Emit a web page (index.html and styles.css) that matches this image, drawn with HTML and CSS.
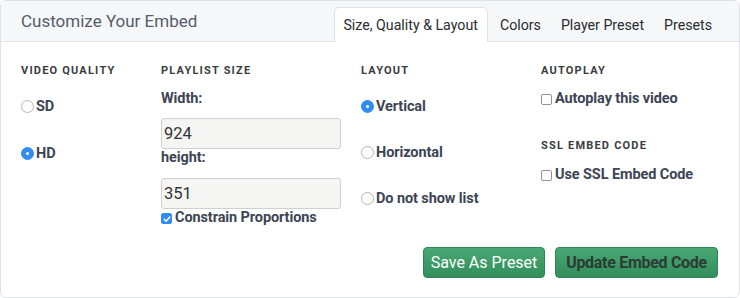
FILE: index.html
```html
<!DOCTYPE html>
<html>
<head>
<meta charset="utf-8">
<link rel="stylesheet" href="styles.css">
</head>
<body>
<div class="card">
  <div class="head">
    <div class="title">Customize Your Embed</div>
    <div class="tabs">
      <div class="tab active">Size, Quality &amp; Layout</div>
      <div class="tab">Colors</div>
      <div class="tab">Player Preset</div>
      <div class="tab">Presets</div>
    </div>
  </div>
  <div class="body">
    <div class="grid">
      <div class="col col-quality">
        <div class="heading">Video Quality</div>
        <div class="opt first"><span class="radio"></span>SD</div>
        <div class="opt"><span class="radio on"></span>HD</div>
      </div>
      <div class="col col-size">
        <div class="heading">Playlist Size</div>
        <div class="lbl first">Width:</div>
        <div class="field">924</div>
        <div class="lbl">height:</div>
        <div class="field">351</div>
        <div class="chk-row tight"><span class="check on"><svg viewBox="0 0 12 12" width="12" height="12"><path d="M3.2 6.3 L5.1 8.2 L8.8 4.1" fill="none" stroke="#fff" stroke-width="1.5" stroke-linecap="round" stroke-linejoin="round"/></svg></span>Constrain Proportions</div>
      </div>
      <div class="col col-layout">
        <div class="heading">Layout</div>
        <div class="opt first"><span class="radio on"></span>Vertical</div>
        <div class="opt gap2"><span class="radio"></span>Horizontal</div>
        <div class="opt gap2"><span class="radio"></span>Do not show list</div>
      </div>
      <div class="col col-auto">
        <div class="heading">Autoplay</div>
        <div class="chk-row first"><span class="check"></span>Autoplay this video</div>
        <div class="heading ssl">SSL Embed Code</div>
        <div class="chk-row ssl-row"><span class="check"></span>Use SSL Embed Code</div>
      </div>
    </div>
    <div class="actions">
      <button class="btn btn-light">Save As Preset</button>
      <button class="btn btn-dark">Update Embed Code</button>
    </div>
  </div>
</div>
</body>
</html>
```
FILE: styles.css
```css
* { box-sizing: border-box; }
html, body { margin: 0; padding: 0; background: #fff; }
body { font-family: Roboto, "Liberation Sans", sans-serif; }

.card {
  width: 740px;
  height: 298px;
  border: 1px solid #dfe1e5;
  border-radius: 6px;
  overflow: hidden;
  background: #fff;
}

.head {
  height: 41px;
  background: #f6f7f9;
  border-bottom: 1px solid #e2e4e8;
  display: flex;
  align-items: flex-end;
  padding: 0 17px 0 20px;
}
.title {
  flex: 1;
  align-self: center;
  font-size: 17px;
  color: #555c6b;
  padding-bottom: 1px;
}
.tabs { display: flex; margin-bottom: -1px; }
.tab {
  height: 35px;
  line-height: 34px;
  padding: 0 9px;
  font-size: 14.2px;
  color: #2a2c30;
  border: 1px solid transparent;
  border-bottom: none;
  white-space: nowrap;
}
.tab.active {
  background: #fff;
  border-color: #dfe1e5;
  border-radius: 5px 5px 0 0;
  padding: 0 9px 0 8px;
  margin-right: 2px;
}

.body { padding: 22px 20px 0 20px; }
.grid {
  display: grid;
  grid-template-columns: 140px 200px 180px 1fr;
}
.col { display: flex; flex-direction: column; align-items: flex-start; }

.heading {
  font-size: 11px;
  line-height: 14px;
  font-weight: 700;
  letter-spacing: 1.2px;
  text-transform: uppercase;
  color: #3a3c40;
}

.opt {
  display: flex;
  align-items: center;
  height: 20px;
  font-size: 14.5px;
  font-weight: 700;
  color: #3d4554;
  letter-spacing: -0.1px;
  margin-top: 27px;
}
.opt.first { margin-top: 18px; }
.opt.gap2 { margin-top: 26px; }

.radio {
  width: 13px;
  height: 13px;
  border-radius: 50%;
  border: 1px solid #b4b6b9;
  background: #fff;
  margin-right: 2px;
  flex: none;
  position: relative;
}
.radio.on {
  background: #2f8cf0;
  border-color: #2f8cf0;
}
.radio.on::after {
  content: "";
  position: absolute;
  left: 4px;
  top: 4px;
  width: 3px;
  height: 3px;
  border-radius: 50%;
  background: #fff;
}

.lbl {
  height: 16px;
  line-height: 16px;
  font-size: 14.5px;
  font-weight: 700;
  color: #3d4554;
  letter-spacing: -0.1px;
  margin-top: 1px;
}
.lbl.first { margin-top: 12.5px; }
.field {
  width: 180px;
  height: 31px;
  margin-top: 11.5px;
  background: #f5f5f3;
  border: 1px solid #cfd0d2;
  border-radius: 3px;
  font-size: 16.5px;
  line-height: 29px;
  padding-left: 2px;
  color: #333;
}

.chk-row {
  display: flex;
  align-items: center;
  height: 16px;
  font-size: 14.5px;
  font-weight: 700;
  color: #3d4554;
  letter-spacing: -0.1px;
  white-space: nowrap;
}
.chk-row.first { margin-top: 12.5px; }
.chk-row.tight { margin-top: 1px; }
.check {
  width: 11px;
  height: 11px;
  border: 1px solid #8f9296;
  border-radius: 2px;
  background: #fff;
  margin-right: 3px;
  flex: none;
  display: flex;
  align-items: center;
  justify-content: center;
  position: relative;
  top: 1px;
}
.check.on {
  background: #2f8cf0;
  border-color: #2f8cf0;
}
.check svg { flex: none; }
.heading.ssl { margin-top: 32px; }
.chk-row.ssl-row { margin-top: 13.5px; }

.actions {
  display: flex;
  justify-content: flex-end;
  gap: 10px;
  margin-top: 21px;
  padding-right: 1px;
}
.btn {
  height: 31px;
  border: 1px solid #2e8556;
  border-radius: 4px;
  background: linear-gradient(#48a872, #338e5c);
  font-family: Roboto, "Liberation Sans", sans-serif;
  font-size: 16px;
  padding: 0;
  white-space: nowrap;
  cursor: pointer;
}
.btn-light { color: #fff; font-weight: 400; width: 122px; }
.btn-dark { color: #2d3b34; font-weight: 700; width: 163px; letter-spacing: -0.3px; }
```
